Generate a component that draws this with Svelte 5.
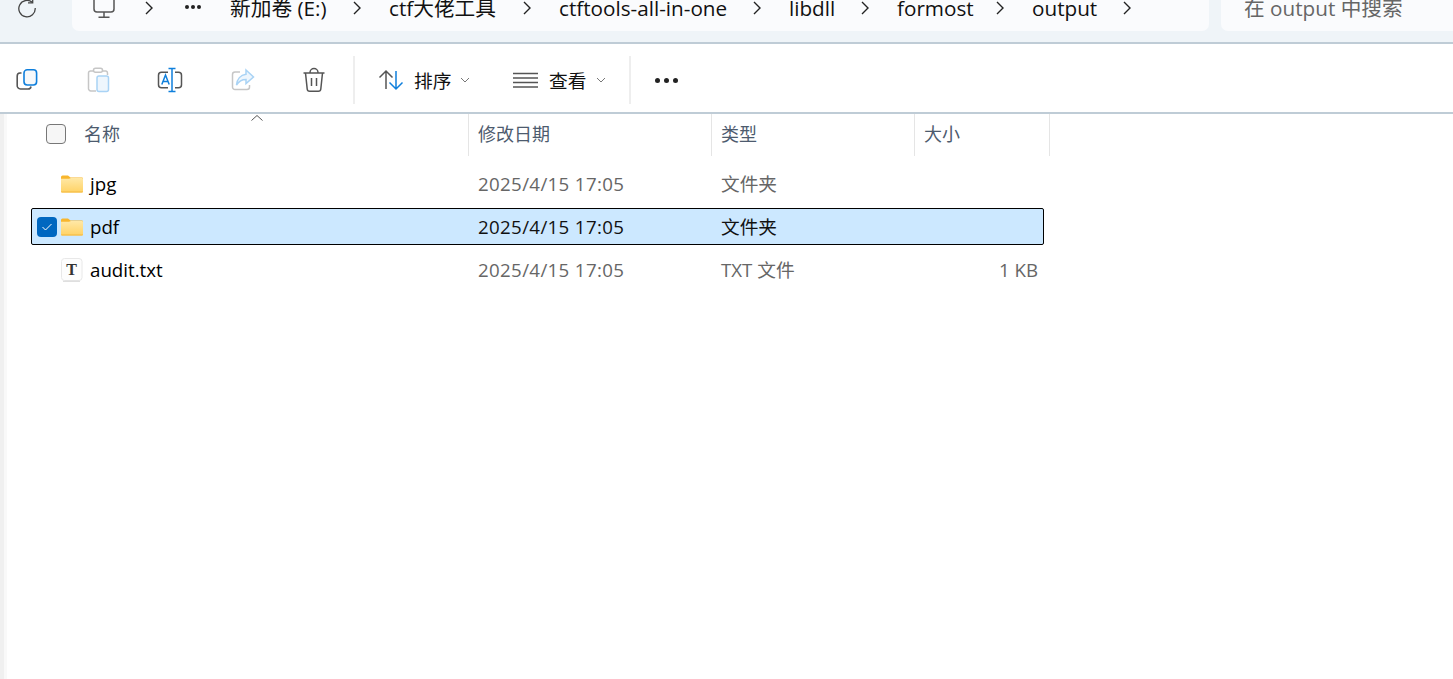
<script>
	const crumbs = [
		{ label: '新加卷 (E:)', width: 159 },
		{ label: 'ctf大佬工具', width: 170 },
		{ label: 'ctftools-all-in-one', width: 230 },
		{ label: 'libdll', width: 108 },
		{ label: 'formost', width: 135 },
		{ label: 'output', width: 127 }
	];

	const columns = [
		{ label: '名称', width: 461 },
		{ label: '修改日期', width: 243 },
		{ label: '类型', width: 203 },
		{ label: '大小', width: 135 }
	];

	const files = [
		{ name: 'jpg', kind: 'folder', date: '2025/4/15 17:05', type: '文件夹', size: '' },
		{ name: 'pdf', kind: 'folder', date: '2025/4/15 17:05', type: '文件夹', size: '', selected: true },
		{ name: 'audit.txt', kind: 'text', date: '2025/4/15 17:05', type: 'TXT 文件', size: '1 KB' }
	];
</script>

<div class="window">
	<header class="topbar">
		<button class="refresh" aria-label="刷新">
			<svg width="20" height="20" viewBox="0 0 20 20" fill="none" stroke="#444" stroke-width="1.3">
				<path d="M15.5 4.5 A8.2 8.2 0 1 0 18.2 10" />
				<path d="M15.7 0 V4.8 H11" />
			</svg>
		</button>
		<nav class="crumbs">
			<svg class="pc" width="24" height="24" viewBox="0 0 24 24" fill="none" stroke="#555" stroke-width="1.5">
				<rect x="2" y="-3" width="20" height="18" rx="3" />
				<path d="M12 15 V20 M6.5 20.2 H17.5" />
			</svg>
			<svg class="chev first" width="10" height="14" viewBox="0 0 10 14" fill="none" stroke="#222" stroke-width="1.4"><path d="M2 1 L8 7 L2 13" /></svg>
			<span class="more">
				<i></i><i></i><i></i>
			</span>
			{#each crumbs as crumb}
				<span class="crumb" style="width: {crumb.width}px">
					<span>{crumb.label}</span>
					<svg class="chev" width="10" height="14" viewBox="0 0 10 14" fill="none" stroke="#222" stroke-width="1.4"><path d="M2 1 L8 7 L2 13" /></svg>
				</span>
			{/each}
		</nav>
		<div class="search">在 output 中搜索</div>
	</header>

	<div class="toolbar">
		<button class="tool copy" aria-label="复制">
			<svg width="24" height="24" viewBox="0 0 24 24" fill="none" stroke-width="1.6">
				<path d="M6.5 5 H5 A3 3 0 0 0 2.2 8 V17 A3.4 3.4 0 0 0 5.6 21 H13 A3 3 0 0 0 16 18.5" stroke="#555" />
				<rect x="9" y="1.8" width="12.6" height="15.2" rx="3.2" stroke="#0f7fdc" fill="#f7f9fb" />
			</svg>
		</button>
		<button class="tool paste" aria-label="粘贴">
			<svg width="24" height="26" viewBox="0 0 24 26" fill="none" stroke-width="1.5">
				<path d="M7 4 H4 A2 2 0 0 0 1.5 6 V21 A2.5 2.5 0 0 0 4 24 H9 M16 4 H19 A2 2 0 0 1 20.5 6 V8" stroke="#c6c6c6" />
				<rect x="6.5" y="1.2" width="9" height="4" rx="2" stroke="#c6c6c6" />
				<rect x="10" y="9" width="11.5" height="15.5" rx="2" stroke="#a9d3f5" fill="#eef6fd" />
			</svg>
		</button>
		<button class="tool rename" aria-label="重命名">
			<svg width="26" height="26" viewBox="0 0 26 26" fill="none" stroke-width="1.5">
				<path d="M11 5.2 H4.5 A3 3 0 0 0 1.5 8.2 V17.8 A3 3 0 0 0 4.5 20.8 H11 M18 5.2 H21.5 A3 3 0 0 1 24.5 8.2 V17.8 A3 3 0 0 1 21.5 20.8 H18" stroke="#555" />
				<path d="M15 1.5 V24.5 M11.5 1.5 H18.5 M11.5 24.5 H18.5" stroke="#0f7fdc" />
				<path d="M4.8 17.5 L8.5 8 L12.2 17.5 M6 14.5 H11" stroke="#0f7fdc" />
			</svg>
		</button>
		<button class="tool share" aria-label="共享">
			<svg width="24" height="24" viewBox="0 0 24 24" fill="none" stroke-width="1.5">
				<path d="M9 4 H4 A2.5 2.5 0 0 0 1.5 6.5 V19 A2.5 2.5 0 0 0 4 21.5 H16 A2.5 2.5 0 0 0 18.5 19 V17" stroke="#c6c6c6" />
				<path d="M15 2 L22.5 9 L15 15.5 V11.5 C11 11.5 8 13 5.5 17 C6 11.5 9.5 7 15 6.3 Z" stroke="#a9d3f5" fill="#eef6fd" />
			</svg>
		</button>
		<button class="tool trash" aria-label="删除">
			<svg width="24" height="26" viewBox="0 0 24 26" fill="none" stroke="#555" stroke-width="1.5">
				<path d="M1.5 6 H22.5 M8 5.5 A4 4 0 0 1 16 5.5" />
				<path d="M3.5 6 L5.2 22 A2.5 2.5 0 0 0 7.7 24.3 H16.3 A2.5 2.5 0 0 0 18.8 22 L20.5 6" />
				<path d="M9.5 11 V19 M14.5 11 V19" />
			</svg>
		</button>
		<span class="divider"></span>
		<button class="menu sort">
			<svg width="26" height="24" viewBox="0 0 26 24" fill="none" stroke-width="1.5">
				<path d="M8 21 V3 M1.5 9.5 L8 3 L14.5 9.5" stroke="#555" />
				<path d="M18 3 V21 M11.5 14.5 L18 21 L24.5 14.5" stroke="#0f7fdc" />
			</svg>
			<span class="label">排序</span>
			<svg class="down" width="10" height="6" viewBox="0 0 10 6" fill="none" stroke="#777"><path d="M1 1 L5 5 L9 1" /></svg>
		</button>
		<button class="menu view">
			<svg width="25" height="16" viewBox="0 0 25 16" fill="none" stroke="#555" stroke-width="1.4">
				<path d="M0 1.5 H25 M0 6 H25 M0 10.5 H25 M0 15 H25" />
			</svg>
			<span class="label">查看</span>
			<svg class="down" width="10" height="6" viewBox="0 0 10 6" fill="none" stroke="#777"><path d="M1 1 L5 5 L9 1" /></svg>
		</button>
		<span class="divider"></span>
		<button class="dots" aria-label="更多"><i></i><i></i><i></i></button>
	</div>

	<div class="content">
		<div class="strip"></div>
		<main class="list">
			<div class="head">
				<span class="head-check"></span>
				<span class="sort-caret">
					<svg width="12" height="6" viewBox="0 0 12 6" fill="none" stroke="#555"><path d="M0.5 5.5 L6 0.5 L11.5 5.5" /></svg>
				</span>
				{#each columns as col}
					<div class="col" style="width: {col.width}px">{col.label}</div>
				{/each}
			</div>
			<div class="rows">
				{#each files as file}
					<div class="row" class:selected={file.selected}>
						<div class="c-name">
							<span class="check">
								{#if file.selected}
									<svg width="12" height="10" viewBox="0 0 12 10" fill="none" stroke="#fff" stroke-width="1"><path d="M1.5 5 L4.5 8 L10.5 2" /></svg>
								{/if}
							</span>
							{#if file.kind === 'folder'}
								<svg class="icon" width="22" height="18" viewBox="0 0 22 18">
									<defs>
										<linearGradient id="folder-fill" x1="0" y1="0" x2="0" y2="1">
											<stop offset="0" stop-color="#ffe8a6" />
											<stop offset="1" stop-color="#ffd264" />
										</linearGradient>
									</defs>
									<path d="M0 2 A1.5 1.5 0 0 1 1.5 0.5 H7 L9.5 2.5 H21 A1 1 0 0 1 22 3.5 V5 H0 Z" fill="#f8b62d" />
									<path d="M0 3.8 H8 L10 3 H21 A1 1 0 0 1 22 4 V16.5 A1 1 0 0 1 21 17.5 H1 A1 1 0 0 1 0 16.5 Z" fill="url(#folder-fill)" />
									<path d="M0 16.4 H22 V16.7 A1 1 0 0 1 21 17.5 H1 A1 1 0 0 1 0 16.7 Z" fill="#f3b73d" />
								</svg>
							{:else}
								<svg class="icon" width="22" height="24" viewBox="0 0 22 24">
									<rect x="0.5" y="0.5" width="20.5" height="22" rx="3" fill="#fdfdfd" stroke="#e8e8e8" />
									<path d="M2 23.3 H19" stroke="#d8d8d8" />
									<text x="10.5" y="16.5" class="t-glyph">T</text>
								</svg>
							{/if}
							<span class="name">{file.name}</span>
						</div>
						<div class="c-date">{file.date}</div>
						<div class="c-type">{file.type}</div>
						<div class="c-size">{file.size}</div>
					</div>
				{/each}
			</div>
		</main>
	</div>
</div>

<style>
	:global(body) {
		background: #fff;
		overflow: hidden;
	}

	.window {
		width: 1453px;
		height: 679px;
		overflow: hidden;
		display: flex;
		flex-direction: column;
		font-family: "Open Sans", "Noto Sans CJK SC", sans-serif;
		font-size: 18.7px;
		color: #111;
	}

	button {
		background: none;
		border: 0;
		padding: 0;
		font: inherit;
		color: inherit;
		display: flex;
		align-items: center;
	}

	.topbar {
		height: 42px;
		flex-shrink: 0;
		background: #eff4f8;
		border-bottom: 2px solid #bfccd6;
		display: flex;
		align-items: flex-start;
		overflow: hidden;
	}

	.refresh {
		width: 72px;
		height: 31px;
		padding-left: 17px;
		align-items: flex-start;
		margin-top: -2px;
	}

	.crumbs {
		width: 1137px;
		height: 31px;
		background: #fafbfd;
		border-radius: 0 0 7px 7px;
		display: flex;
		align-items: flex-start;
		line-height: 16px;
		white-space: nowrap;
		font-size: 20.7px;
	}

	.pc {
		margin: -3px 0 0 20px;
		flex-shrink: 0;
	}

	.chev {
		flex-shrink: 0;
		margin-top: 1px;
	}

	.chev.first {
		margin-left: 28px;
	}

	.more {
		display: flex;
		gap: 2px;
		margin: 5px 0 0 31px;
		width: 45px;
	}

	.more i {
		width: 4px;
		height: 4px;
		border-radius: 50%;
		background: #222;
	}

	.crumb {
		display: flex;
		justify-content: space-between;
		padding-right: 27px;
		box-sizing: border-box;
		flex-shrink: 0;
	}

	.search {
		margin-left: 12px;
		flex: 1;
		height: 31px;
		background: #fafbfd;
		border-radius: 0 0 0 7px;
		color: #666;
		padding-left: 23px;
		line-height: 16px;
		font-size: 20.7px;
		white-space: nowrap;
	}

	.toolbar {
		height: 64px;
		padding-top: 4px;
		flex-shrink: 0;
		border-bottom: 2px solid #bfccd6;
		background: #fff;
		display: flex;
		align-items: center;
		padding-left: 15px;
	}

	.tool {
		height: 30px;
		justify-content: flex-start;
	}

	.copy { width: 72px; }
	.paste { width: 70px; }
	.rename { width: 74px; }
	.share { width: 71px; }
	.trash { width: 51px; }

	.divider {
		width: 2px;
		height: 48px;
		background: #eeeeee;
	}

	.menu {
		gap: 10px;
		font-size: 18.7px;
	}

	.label {
		padding-bottom: 2px;
	}

	.sort {
		margin-left: 23px;
		width: 135px;
	}

	.view {
		width: 116px;
		gap: 11px;
	}

	.sort .down,
	.view .down {
		margin-left: -1px;
	}

	.dots {
		gap: 4px;
		margin-left: 24px;
	}

	.dots i {
		width: 5px;
		height: 5px;
		border-radius: 50%;
		background: #222;
	}

	.content {
		flex: 1;
		display: flex;
	}

	.strip {
		width: 4px;
		background: #f0f0f0;
		border-right: 3px solid #f9f9f9;
	}

	.list {
		flex: 1;
		position: relative;
	}

	.head {
		height: 42px;
		display: flex;
		padding-left: 1px;
		color: #4d5b6e;
		font-size: 18px;
		line-height: 41px;
		position: relative;
	}

	.head-check {
		position: absolute;
		left: 39px;
		top: 10px;
		width: 18px;
		height: 18px;
		border: 1.5px solid #777;
		border-radius: 4px;
		background: #f6f6f6;
	}

	.sort-caret {
		position: absolute;
		left: 244px;
		top: 0;
		line-height: 0;
	}

	.col {
		box-sizing: border-box;
		border-right: 1px solid #e5e5e5;
		padding-left: 9px;
	}

	.col:first-of-type {
		padding-left: 76px;
	}

	.rows {
		padding: 9px 0 0 24px;
		display: flex;
		flex-direction: column;
		gap: 6px;
	}

	.row {
		width: 1013px;
		height: 37px;
		box-sizing: border-box;
		border: 1px solid transparent;
		display: grid;
		grid-template-columns: 437px 243px 203px 128px;
		align-items: center;
		color: #666;
		line-height: 35px;
	}

	.row.selected {
		background: #cce8ff;
		border-color: #000;
		border-radius: 2px;
		color: #111;
	}

	.c-name {
		display: flex;
		align-items: center;
		padding-left: 5px;
		color: #000;
	}

	.check {
		width: 20px;
		height: 20px;
		border-radius: 4px;
		flex-shrink: 0;
		display: flex;
		align-items: center;
		justify-content: center;
	}

	.selected .check {
		background: #0067c0;
	}

	.icon {
		margin-left: 4px;
		flex-shrink: 0;
	}

	.name {
		margin-left: 7px;
	}

	.c-date {
		padding-left: 9px;
		letter-spacing: 0.35px;
	}

	.c-type {
		padding-left: 9px;
	}

	.c-size {
		text-align: right;
		padding-right: 5px;
	}

	.t-glyph {
		font-family: "Liberation Serif", serif;
		font-size: 16px;
		font-weight: 700;
		text-anchor: middle;
		fill: #333;
	}
</style>
